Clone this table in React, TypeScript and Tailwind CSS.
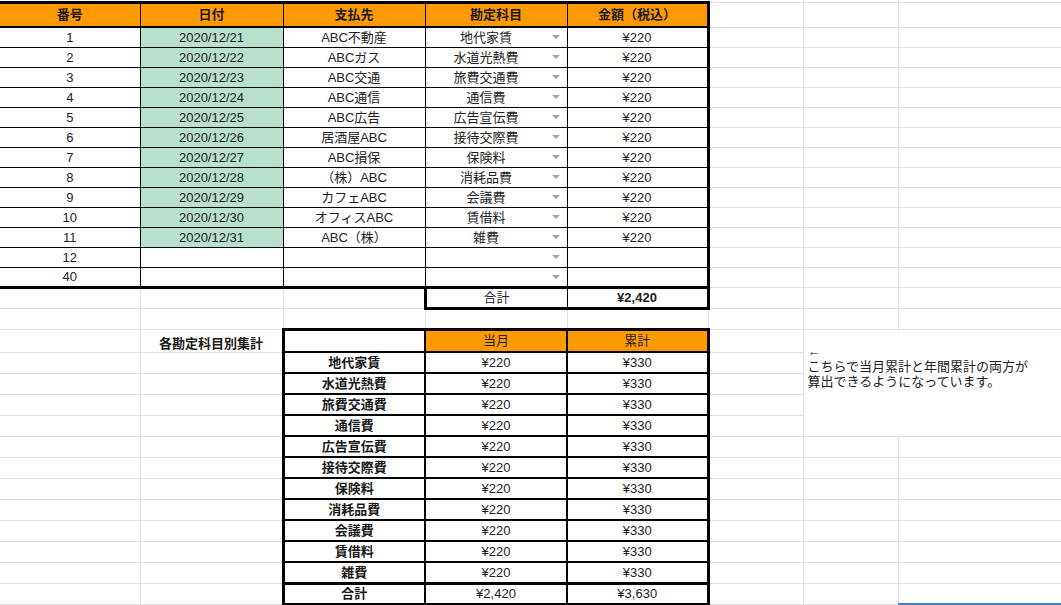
import React from "react";

const top = [
  ["1", "2020/12/21", "ABC不動産", "地代家賃", "¥220"],
  ["2", "2020/12/22", "ABCガス", "水道光熱費", "¥220"],
  ["3", "2020/12/23", "ABC交通", "旅費交通費", "¥220"],
  ["4", "2020/12/24", "ABC通信", "通信費", "¥220"],
  ["5", "2020/12/25", "ABC広告", "広告宣伝費", "¥220"],
  ["6", "2020/12/26", "居酒屋ABC", "接待交際費", "¥220"],
  ["7", "2020/12/27", "ABC損保", "保険料", "¥220"],
  ["8", "2020/12/28", "（株）ABC", "消耗品費", "¥220"],
  ["9", "2020/12/29", "カフェABC", "会議費", "¥220"],
  ["10", "2020/12/30", "オフィスABC", "賃借料", "¥220"],
  ["11", "2020/12/31", "ABC（株）", "雑費", "¥220"],
  ["12", "", "", "", ""],
  ["40", "", "", "", ""],
];

const summary = [
  "地代家賃",
  "水道光熱費",
  "旅費交通費",
  "通信費",
  "広告宣伝費",
  "接待交際費",
  "保険料",
  "消耗品費",
  "会議費",
  "賃借料",
  "雑費",
];

const gray = "border border-[#e0e0e0] p-0";
const blk = "border border-black p-0 text-center";

function Arrow() {
  return (
    <span className="absolute right-[7px] top-1/2 -translate-y-1/2 w-0 h-0 border-l-[4px] border-r-[4px] border-t-[4px] border-l-transparent border-r-transparent border-t-[#a3a3a3]" />
  );
}

export default function App() {
  return (
    <div className="w-[1061px] h-[605px] overflow-hidden bg-white text-[13px] leading-[15px] text-[#222] font-[family-name:Liberation_Sans,Noto_Sans_CJK_JP,sans-serif]">
      <table className="table-fixed border-collapse w-[1061px]">
        <colgroup>
          <col className="w-[140px]" />
          <col className="w-[143px]" />
          <col className="w-[142px]" />
          <col className="w-[142px]" />
          <col className="w-[141px]" />
          <col className="w-[95px]" />
          <col className="w-[95px]" />
          <col className="w-[163px]" />
        </colgroup>
        <tbody>
          {/* spacer row */}
          <tr className="h-[2px]">
            <td className={`${gray} border-t-0 border-l-0`} />
            <td className={`${gray} border-t-0`} />
            <td className={`${gray} border-t-0`} />
            <td className={`${gray} border-t-0`} />
            <td className={`${gray} border-t-0`} />
            <td className={`${gray} border-t-0`} />
            <td className={`${gray} border-t-0`} />
            <td className={`${gray} border-t-0 border-r-0`} />
          </tr>
          {/* header */}
          <tr className="h-[25px]">
            {["番号", "日付", "支払先", "勘定科目", "金額（税込）"].map((h, i) => (
              <td
                key={h}
                className={`${blk} bg-[#ff9900] font-bold text-[#1a1a1a] border-t-[3px] border-b-[2px] ${
                  i === 0 ? "border-l-0" : ""
                } ${i === 4 ? "border-r-[3px]" : ""}`}
              >
                {h}
              </td>
            ))}
            <td className={gray} />
            <td className={gray} />
            <td className={`${gray} border-r-0`} />
          </tr>
          {top.map((r, idx) => {
            const last = idx === top.length - 1;
            const bb = last ? "border-b-[3px]" : "";
            return (
              <tr key={r[0]} className="h-[20px]">
                <td className={`${blk} border-l-0 ${bb}`}>{r[0]}</td>
                <td className={`${blk} ${bb} ${r[1] ? "bg-[#b7e1cd]" : ""}`}>{r[1]}</td>
                <td className={`${blk} ${bb}`}>{r[2]}</td>
                <td className={`${blk} ${bb} relative pr-[20px]`}>
                  {r[3]}
                  <Arrow />
                </td>
                <td className={`${blk} ${bb} border-r-[3px]`}>{r[4]}</td>
                <td className={gray} />
                <td className={gray} />
                <td className={`${gray} border-r-0`} />
              </tr>
            );
          })}
          {/* total row */}
          <tr className="h-[21px]">
            <td className={`${gray} border-l-0`} />
            <td className={gray} />
            <td className={gray} />
            <td className={`${blk} border-l-[3px] border-b-[3px]`}>合計</td>
            <td className={`${blk} border-r-[3px] border-b-[3px] font-bold`}>¥2,420</td>
            <td className={gray} />
            <td className={gray} />
            <td className={`${gray} border-r-0`} />
          </tr>
          {/* empty row */}
          <tr className="h-[21px]">
            <td className={`${gray} border-l-0`} />
            <td className={gray} />
            <td className={gray} />
            <td className={gray} />
            <td className={gray} />
            <td className={gray} />
            <td className={gray} />
            <td className={`${gray} border-r-0`} />
          </tr>
          {/* summary header */}
          <tr className="h-[23px]">
            <td className={`${gray} border-l-0`} />
            <td className={`${gray} text-center font-bold text-[#1a1a1a] align-bottom pb-[1px]`}>各勘定科目別集計</td>
            <td className={`${blk} border-t-[3px] border-l-[3px] border-r-[2px] border-b-[2px]`} />
            <td className={`${blk} bg-[#ff9900] border-t-[3px] border-r-[2px] border-b-[2px]`}>当月</td>
            <td className={`${blk} bg-[#ff9900] border-t-[3px] border-r-[3px] border-b-[2px]`}>累計</td>
            <td className={gray} />
            <td colSpan={2} rowSpan={5} className={`${gray} border-r-0 align-top pt-[14px] pl-[4px] text-left`}>
              <div>←</div>
              <div>こちらで当月累計と年間累計の両方が</div>
              <div>算出できるようになっています。</div>
            </td>
          </tr>
          {summary.map((s, i) => (
            <tr key={s} className="h-[21px]">
              <td className={`${gray} border-l-0`} />
              <td className={gray} />
              <td className={`${blk} border-l-[3px] border-r-[2px] border-b-[2px] font-bold text-[#1a1a1a]`}>{s}</td>
              <td className={`${blk} border-r-[2px] border-b-[2px]`}>¥220</td>
              <td className={`${blk} border-r-[3px] border-b-[2px]`}>¥330</td>
              <td className={gray} />
              {i >= 4 ? (
                <>
                  <td className={gray} />
                  <td className={`${gray} border-r-0`} />
                </>
              ) : null}
            </tr>
          ))}
          <tr className="h-[21px]">
            <td className={`${gray} border-l-0`} />
            <td className={gray} />
            <td className={`${blk} border-l-[3px] border-t-[3px] border-r-[2px] border-b-[3px] font-bold text-[#1a1a1a]`}>合計</td>
            <td className={`${blk} border-t-[3px] border-r-[2px] border-b-[3px]`}>¥2,420</td>
            <td className={`${blk} border-t-[3px] border-r-[3px] border-b-[3px]`}>¥3,630</td>
            <td className={gray} />
            <td className={gray} />
            <td className={`${gray} border-r-0 border-b-2 border-b-[#4a7cc0]`} />
          </tr>
          <tr className="h-[21px]">
            <td className={`${gray} border-l-0`} />
            <td className={gray} />
            <td className={gray} />
            <td className={gray} />
            <td className={gray} />
            <td className={gray} />
            <td className={gray} />
            <td className={`${gray} border-r-0`} />
          </tr>
        </tbody>
      </table>
    </div>
  );
}
